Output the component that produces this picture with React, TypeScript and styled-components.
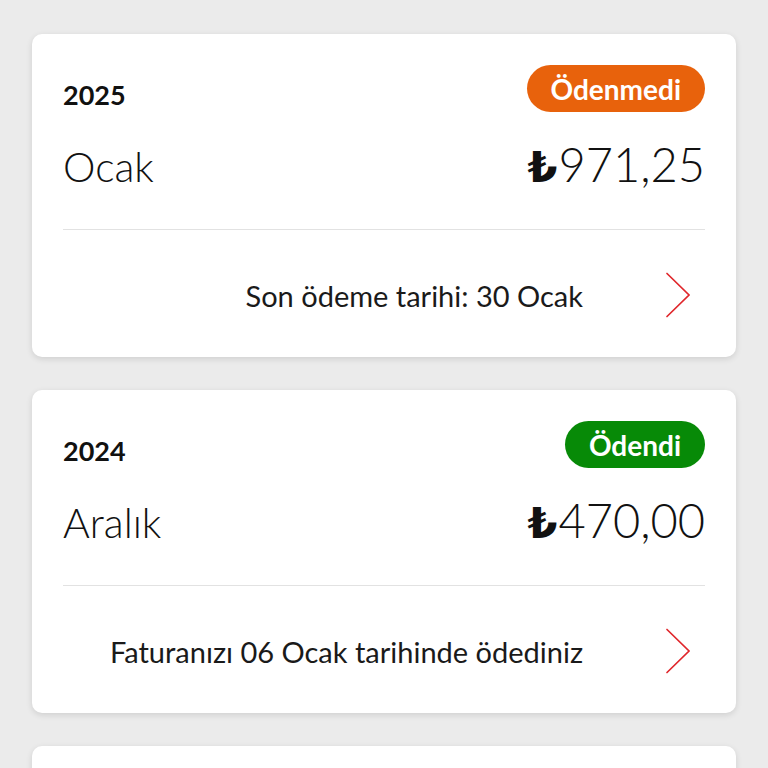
import * as React from "react";
import styled, { createGlobalStyle } from "styled-components";

const GlobalStyle = createGlobalStyle`
  html, body {
    margin: 0;
    padding: 0;
    background: #ebebeb;
    font-family: Lato, "Open Sans", "DejaVu Sans", sans-serif;
    color: #1a1a1a;
  }
`;

const Page = styled.div`
  padding: 34px 32px;
  display: flex;
  flex-direction: column;
  gap: 33px;
`;

const Card = styled.div`
  background: #ffffff;
  border-radius: 10px;
  box-shadow: 0 2px 6px rgba(0, 0, 0, 0.12);
  min-height: 323px;
`;

const CardHead = styled.div`
  padding: 31px 31px 40px;
`;

const TopRow = styled.div`
  display: flex;
  justify-content: space-between;
  align-items: flex-end;
  height: 47px;
`;

const Year = styled.h3`
  margin: 0 0 4px;
  font-size: 27px;
  font-weight: 700;
  line-height: 1;
  color: #111;
`;

type Status = "unpaid" | "paid";

const Badge = styled.span<{ $status: Status }>`
  display: inline-flex;
  align-items: center;
  justify-content: center;
  height: 47px;
  padding: 0 24px;
  border-radius: 24px;
  background: ${(p) => (p.$status === "paid" ? "#078a07" : "#e8620c")};
  color: #fff;
  font-size: 28px;
  font-weight: 700;
  box-sizing: border-box;
`;

const MainRow = styled.div`
  display: flex;
  justify-content: space-between;
  align-items: baseline;
  margin-top: 29px;
  line-height: 1;
`;

const Month = styled.span`
  font-size: 41px;
  font-weight: 300;
  color: #111;
`;

const Amount = styled.span`
  font-size: 47px;
  font-weight: 300;
  color: #111;
`;

const Lira = styled.span`
  font-family: "DejaVu Sans", sans-serif;
  font-weight: 700;
  font-size: 43px;
  margin-right: 1px;
`;

const Divider = styled.hr`
  margin: 0 31px;
  border: none;
  height: 1px;
  background: #e2e2e2;
`;

const Footer = styled.button`
  width: 100%;
  height: 126px;
  display: flex;
  justify-content: flex-end;
  align-items: center;
  gap: 74px;
  padding: 4px 31px 0 31px;
  background: transparent;
  border: none;
  font-family: inherit;
  box-sizing: border-box;
`;

const FooterText = styled.span`
  font-size: 29px;
  color: #1a1a1a;
`;

const Chevron = () => (
  <svg width="48" height="48" viewBox="0 0 48 48" fill="none">
    <path
      d="M10 2.5 L32 24 L10 45.5"
      stroke="#e0262b"
      strokeWidth="1.7"
      strokeLinecap="round"
      strokeLinejoin="miter"
    />
  </svg>
);

interface Bill {
  id: string;
  year: string;
  month: string;
  amount: string;
  status: Status;
  note: string;
}

const bills: Bill[] = [
  {
    id: "2025-01",
    year: "2025",
    month: "Ocak",
    amount: "971,25",
    status: "unpaid",
    note: "Son ödeme tarihi: 30 Ocak",
  },
  {
    id: "2024-12",
    year: "2024",
    month: "Aralık",
    amount: "470,00",
    status: "paid",
    note: "Faturanızı 06 Ocak tarihinde ödediniz",
  },
];

function BillCard({ bill }: { bill: Bill }) {
  return (
    <Card>
      <CardHead>
        <TopRow>
          <Year>{bill.year}</Year>
          <Badge $status={bill.status}>
            {bill.status === "paid" ? "Ödendi" : "Ödenmedi"}
          </Badge>
        </TopRow>
        <MainRow>
          <Month>{bill.month}</Month>
          <Amount>
            <Lira>₺</Lira>
            {bill.amount}
          </Amount>
        </MainRow>
      </CardHead>
      <Divider />
      <Footer>
        <FooterText>{bill.note}</FooterText>
        <Chevron />
      </Footer>
    </Card>
  );
}

export default function App() {
  return (
    <>
      <GlobalStyle />
      <Page>
        {bills.map((bill) => (
          <BillCard key={bill.id} bill={bill} />
        ))}
        <Card />
      </Page>
    </>
  );
}
